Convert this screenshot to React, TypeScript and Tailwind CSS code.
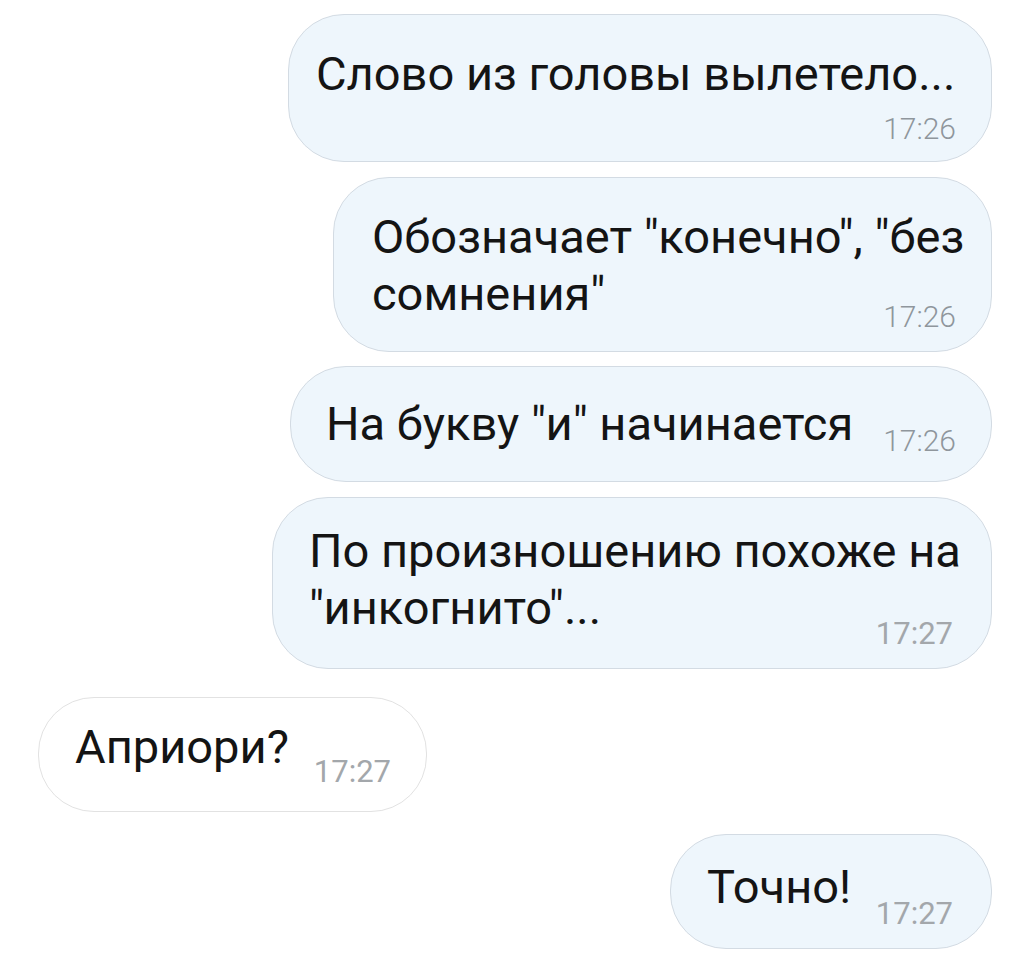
type Msg = {
  lines: string[];
  time: string;
  out: boolean;
  box: string;
  pad: string;
  timeCls: string;
  light?: boolean;
};

const messages: Msg[] = [
  {
    lines: ["Слово из головы вылетело..."],
    time: "17:26",
    out: true,
    box: "mt-[14px] w-[704px] h-[148px]",
    pad: "pl-[27px] pr-[35px] pt-[30px]",
    timeCls: "mt-[12px]",
    light: true,
  },
  {
    lines: ["Обозначает \"конечно\", \"без", "сомнения\""],
    time: "17:26",
    out: true,
    box: "mt-[15px] w-[659px] h-[175px]",
    pad: "pl-[38px] pr-[35px] pt-[30px]",
    timeCls: "-mt-[20px]",
    light: true,
  },
  {
    lines: ["На букву \"и\" начинается"],
    time: "17:26",
    out: true,
    box: "mt-[14px] w-[702px] h-[116px]",
    pad: "pl-[35px] pr-[35px] pt-[28px]",
    timeCls: "-mt-[26px]",
    light: true,
  },
  {
    lines: ["По произношению похоже на", "\"инкогнито\"..."],
    time: "17:27",
    out: true,
    box: "mt-[15px] w-[720px] h-[172px]",
    pad: "pl-[36px] pr-[38px] pt-[24px]",
    timeCls: "-mt-[18px]",
  },
  {
    lines: ["Априори?"],
    time: "17:27",
    out: false,
    box: "mt-[28px] w-[389px] h-[115px]",
    pad: "pl-[36px] pr-[35px] pt-[20px]",
    timeCls: "-mt-[19px]",
  },
  {
    lines: ["Точно!"],
    time: "17:27",
    out: true,
    box: "mt-[22px] w-[322px] h-[115px]",
    pad: "pl-[36px] pr-[38px] pt-[23px]",
    timeCls: "-mt-[17px]",
  },
];

function Bubble({ msg }: { msg: Msg }) {
  return (
    <div
      className={`${msg.box} ${msg.pad} flex flex-col rounded-[56px] border ${
        msg.out
          ? "self-end border-[#d3dbe3] bg-[#eef6fc]"
          : "self-start ml-[38px] border-[#e2e2e2] bg-white"
      }`}
    >
      <div className="text-[47px] leading-[57px] text-[#141414] whitespace-nowrap">
        {msg.lines.map((l, i) => (
          <div key={i}>{l}</div>
        ))}
      </div>
      <span
        className={`${msg.timeCls} self-end ${
          msg.light
            ? "text-[30px] leading-[30px] font-light text-[#8f969c]"
            : "text-[31px] leading-[31px] text-[#a3a7ab]"
        }`}
      >
        {msg.time}
      </span>
    </div>
  );
}

export default function App() {
  return (
    <div className="min-h-[979px] w-full bg-white font-['Roboto',sans-serif]">
      <div className="flex flex-col pr-[29px]">
        {messages.map((m, i) => (
          <Bubble key={i} msg={m} />
        ))}
      </div>
    </div>
  );
}
